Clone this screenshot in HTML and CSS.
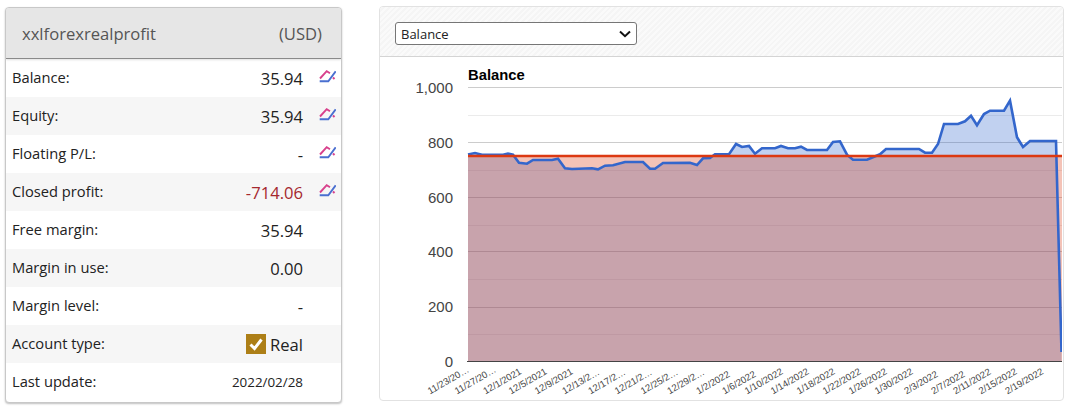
FILE: index.html
```html
<!DOCTYPE html>
<html lang="en">
<head>
<meta charset="utf-8">
<title>xxlforexrealprofit</title>
<link rel="stylesheet" href="styles.css">
</head>
<body>
<svg class="defs" width="0" height="0" aria-hidden="true">
  <symbol id="chart-icon" viewBox="0 0 18 14">
    <path d="M2 9.5 L8.7 2.2 L12 4.2" fill="none" stroke="#d8418c" stroke-width="1.9"/>
    <path d="M15 8.5 L16.5 10" fill="none" stroke="#d8418c" stroke-width="1.9"/>
    <path d="M1.7 12.2 H10.3 L17.7 2.2" fill="none" stroke="#4a6fd0" stroke-width="1.9"/>
  </symbol>
</svg>
<main class="page">
  <section class="account">
    <header class="account-head"><span>xxlforexrealprofit</span><span>(USD)</span></header>
    <div class="row"><span class="label">Balance:</span><span class="value">35.94</span><svg class="icon"><use href="#chart-icon"/></svg></div>
    <div class="row"><span class="label">Equity:</span><span class="value">35.94</span><svg class="icon"><use href="#chart-icon"/></svg></div>
    <div class="row"><span class="label">Floating P/L:</span><span class="value">-</span><svg class="icon"><use href="#chart-icon"/></svg></div>
    <div class="row"><span class="label">Closed profit:</span><span class="value loss">-714.06</span><svg class="icon"><use href="#chart-icon"/></svg></div>
    <div class="row"><span class="label">Free margin:</span><span class="value">35.94</span><span class="icon"></span></div>
    <div class="row"><span class="label">Margin in use:</span><span class="value">0.00</span><span class="icon"></span></div>
    <div class="row"><span class="label">Margin level:</span><span class="value">-</span><span class="icon"></span></div>
    <div class="row"><span class="label">Account type:</span><span class="value real"><span class="check"><svg viewBox="0 0 20 20" width="20" height="20"><path d="M4.5 10.5 L8.5 14.5 L15.5 5.5" fill="none" stroke="#fff" stroke-width="3"/></svg></span>Real</span><span class="icon"></span></div>
    <div class="row"><span class="label">Last update:</span><span class="value small">2022/02/28</span><span class="icon"></span></div>
  </section>
  <section class="chart-card">
    <div class="toolbar">
      <select class="picker"><option>Balance</option></select>
    </div>
    <svg class="chart" width="682" height="343" viewBox="380 57 682 343">
      <g stroke="#ebebeb" stroke-width="1">
        <path d="M468 115.5H1062M468 170.5H1062M468 225.5H1062M468 279.5H1062M468 334.5H1062"/>
      </g>
      <g stroke="#cccccc" stroke-width="1">
        <path d="M468 87.5H1062M468 142.5H1062M468 197.5H1062M468 251.5H1062M468 307.5H1062"/>
      </g>
      <text class="title" x="468" y="80">Balance</text>
      <g class="ytick">
        <text x="453" y="93">1,000</text>
        <text x="453" y="148">800</text>
        <text x="453" y="203">600</text>
        <text x="453" y="257">400</text>
        <text x="453" y="312">200</text>
        <text x="453" y="367">0</text>
      </g>
      <path d="M468 154.5L475 153L482 154.7L503 154.7L508 153.7L513 154.7L519 162.7L527 163.7L533 160L552 160L558 158.7L565 168.3L572 169L592 168.3L598 169.3L605 165.7L613 165.3L625 162L643 162L650 168.7L655 168.7L663 163L690 162.7L697 165L703 158.3L710 158L715 154.3L729 154.3L736 144L742 147L749 146L755 153.7L762 148.3L775 148.3L781 146L788 148.3L795 148.3L801 146.7L807 150L827 150L833 142L840 141.3L847 154.7L853 159.7L867 159.7L880 154.3L886 149L919 149L925 152.7L932 152.7L938 144L944 124L958 124L965 121.3L971 115.7L977 125.3L984 114L990 110.7L1004 110.7L1010 100.7L1017 137.3L1023 147L1030 141L1056 141L1061.5 352V361.5H468Z" fill="#3366cc" fill-opacity="0.3"/>
      <rect x="468" y="156" width="594" height="205.5" fill="#dc3912" fill-opacity="0.3"/>
      <path d="M468 154.5L475 153L482 154.7L503 154.7L508 153.7L513 154.7L519 162.7L527 163.7L533 160L552 160L558 158.7L565 168.3L572 169L592 168.3L598 169.3L605 165.7L613 165.3L625 162L643 162L650 168.7L655 168.7L663 163L690 162.7L697 165L703 158.3L710 158L715 154.3L729 154.3L736 144L742 147L749 146L755 153.7L762 148.3L775 148.3L781 146L788 148.3L795 148.3L801 146.7L807 150L827 150L833 142L840 141.3L847 154.7L853 159.7L867 159.7L880 154.3L886 149L919 149L925 152.7L932 152.7L938 144L944 124L958 124L965 121.3L971 115.7L977 125.3L984 114L990 110.7L1004 110.7L1010 100.7L1017 137.3L1023 147L1030 141L1056 141L1061.5 352" fill="none" stroke="#3366cc" stroke-width="2.6"/>
      <path d="M468 156H1062" stroke="#dc3912" stroke-width="2.4"/>
      <path d="M467 361.5H1062" stroke="#444" stroke-width="1"/>
      <g class="xtick">
        <text transform="translate(430 394.5) rotate(-30)">11/23/20…</text>
        <text transform="translate(457 394.5) rotate(-30)">11/27/20…</text>
        <text transform="translate(485.5 394.5) rotate(-30)">12/1/2021</text>
        <text transform="translate(511 394.5) rotate(-30)">12/5/2021</text>
        <text transform="translate(537 394.5) rotate(-30)">12/9/2021</text>
        <text transform="translate(564.5 394.5) rotate(-30)">12/13/2…</text>
        <text transform="translate(590.5 394.5) rotate(-30)">12/17/2…</text>
        <text transform="translate(617 394.5) rotate(-30)">12/21/2…</text>
        <text transform="translate(643 394.5) rotate(-30)">12/25/2…</text>
        <text transform="translate(669.5 394.5) rotate(-30)">12/29/2…</text>
        <text transform="translate(698.5 394.5) rotate(-30)">1/2/2022</text>
        <text transform="translate(724.5 394.5) rotate(-30)">1/6/2022</text>
        <text transform="translate(747 394.5) rotate(-30)">1/10/2022</text>
        <text transform="translate(773 394.5) rotate(-30)">1/14/2022</text>
        <text transform="translate(799 394.5) rotate(-30)">1/18/2022</text>
        <text transform="translate(825 394.5) rotate(-30)">1/22/2022</text>
        <text transform="translate(851 394.5) rotate(-30)">1/26/2022</text>
        <text transform="translate(877 394.5) rotate(-30)">1/30/2022</text>
        <text transform="translate(906.5 394.5) rotate(-30)">2/3/2022</text>
        <text transform="translate(933.5 394.5) rotate(-30)">2/7/2022</text>
        <text transform="translate(955.5 394.5) rotate(-30)">2/11/2022</text>
        <text transform="translate(981 394.5) rotate(-30)">2/15/2022</text>
        <text transform="translate(1007.5 394.5) rotate(-30)">2/19/2022</text>
      </g>
    </svg>
  </section>
</main>
</body>
</html>
```
FILE: styles.css
```css
* { box-sizing: border-box; }
html, body { margin: 0; padding: 0; background: #fff; }
body { width: 1070px; height: 408px; overflow: hidden; font-family: "Open Sans", sans-serif; color: #222; }
.defs { position: absolute; }
.page { display: flex; align-items: flex-start; gap: 37px; padding: 6px 0 0 5px; }

.account { width: 337px; height: 396px; margin-top: 1px; background: #fff; border: 1px solid #c8c8c8; border-radius: 4px; box-shadow: 0 1px 2px rgba(0,0,0,.25); overflow: hidden; }
.account-head { display: flex; justify-content: space-between; align-items: center; height: 51px; padding: 0 19px 0 16px; background: #e6e6e6; border-bottom: 1px solid #8a8a8a; box-shadow: 0 1px 2px rgba(0,0,0,.12); font-size: 16.6px; color: #555; position: relative; }

.row { display: flex; align-items: center; height: 38px; padding: 0 5px 0 6px; font-size: 14.7px; }
.row:nth-of-type(even) { background: #f6f6f6; }
.label { flex: 1; margin-top: -2px; }
.value { font-size: 16.6px; margin-right: 16px; }
.loss { color: #a5282e; }
.small { font-size: 13.4px; }
.real { display: flex; align-items: center; gap: 4px; }
.check { display: block; width: 20px; height: 20px; background: #ad7f17; }
.check svg { display: block; }
.icon { display: block; width: 18px; height: 14px; margin-top: -5px; margin-left: -1px; }

.chart-card { width: 685px; height: 395px; border: 1px solid #e2e2e2; border-radius: 4px; overflow: hidden; }
.toolbar { height: 50px; padding: 15px 0 0 15px; border-bottom: 1px solid #d4d4d4; background: repeating-linear-gradient(135deg, #fafafa 0 2px, #f5f5f5 2px 4px); }
.picker { display: block; width: 242px; height: 23px; font-family: "Open Sans", sans-serif; font-size: 13px; color: #222; border: 1px solid #767676; border-radius: 3px; padding-left: 5px; appearance: none; -webkit-appearance: none; background: #fff url("data:image/svg+xml,%3Csvg xmlns='http://www.w3.org/2000/svg' width='12' height='8'%3E%3Cpath d='M1 1.5L6 6.2L11 1.5' fill='none' stroke='%23111' stroke-width='2'/%3E%3C/svg%3E") no-repeat right 5px center; }
.chart { display: block; font-family: "Liberation Sans", Arial, sans-serif; }
.title { font-size: 14.8px; font-weight: 700; fill: #000; }
.ytick text { font-size: 15px; fill: #444; text-anchor: end; }
.xtick text { font-size: 9.5px; fill: #444; }
```
